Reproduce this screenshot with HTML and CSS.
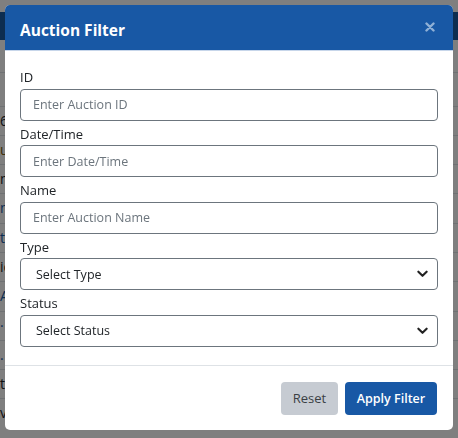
FILE: index.html
```html
<!DOCTYPE html>
<html lang="en">
<head>
<meta charset="utf-8">
<title>Auction Filter</title>
<link rel="stylesheet" href="styles.css">
</head>
<body>
<div class="page">
  <div class="topbar"></div>
  <div class="table">
    <div class="thead"></div>
    <div class="row"><span class="cell">6</span></div>
    <div class="row"><span class="cell gold">ul</span></div>
    <div class="row"><span class="cell">m</span></div>
    <div class="row"><span class="cell link">m</span></div>
    <div class="row"><span class="cell link">t</span></div>
    <div class="row"><span class="cell">ic</span></div>
    <div class="row"><span class="cell link">A</span></div>
    <div class="row"><span class="cell link">·</span></div>
    <div class="row"><span class="cell link">.</span></div>
    <div class="row"><span class="cell">t</span></div>
    <div class="row"><span class="cell">v</span></div>
  </div>
</div>
<div class="backdrop"></div>
<div class="modal">
  <div class="modal-header">
    <h5 class="modal-title">Auction Filter</h5>
    <button class="close" type="button" aria-label="Close">
      <svg viewBox="0 0 10 10" width="10" height="10"><path d="M1.5 1.5 L8.5 8.5 M8.5 1.5 L1.5 8.5" stroke="currentColor" stroke-width="2.4" stroke-linecap="round"/></svg>
    </button>
  </div>
  <div class="modal-body">
    <div class="group">
      <label class="label">ID</label>
      <input class="control" type="text" placeholder="Enter Auction ID">
    </div>
    <div class="group">
      <label class="label">Date/Time</label>
      <input class="control" type="text" placeholder="Enter Date/Time">
    </div>
    <div class="group">
      <label class="label">Name</label>
      <input class="control" type="text" placeholder="Enter Auction Name">
    </div>
    <div class="group">
      <label class="label">Type</label>
      <div class="select">
        <span class="select-text">Select Type</span>
        <svg class="chev" viewBox="0 0 12 8" width="11" height="8"><path d="M1.5 1.5 L6 6 L10.5 1.5" fill="none" stroke="#222" stroke-width="2.3" stroke-linecap="round" stroke-linejoin="round"/></svg>
      </div>
    </div>
    <div class="group">
      <label class="label">Status</label>
      <div class="select">
        <span class="select-text">Select Status</span>
        <svg class="chev" viewBox="0 0 12 8" width="11" height="8"><path d="M1.5 1.5 L6 6 L10.5 1.5" fill="none" stroke="#222" stroke-width="2.3" stroke-linecap="round" stroke-linejoin="round"/></svg>
      </div>
    </div>
  </div>
  <div class="modal-footer">
    <button class="btn btn-reset" type="button">Reset</button>
    <button class="btn btn-apply" type="button">Apply Filter</button>
  </div>
</div>
</body>
</html>
```
FILE: styles.css
```css
* { box-sizing: border-box; }
html, body { margin: 0; padding: 0; }
body {
  width: 458px;
  height: 438px;
  overflow: hidden;
  background: #fff;
  font-family: "Open Sans", "Noto Sans", sans-serif;
  color: #212529;
}
.page { padding-top: 12px; }
.topbar { height: 28px; background: #1b5aa0; }
.table { margin-top: 32px; }
.thead { height: 33.5px; border-top: 1px solid #dee2e6; }
.row {
  height: 29.3px;
  border-top: 1px solid #dee2e6;
  font-size: 14px;
  line-height: 28px;
  overflow: hidden;
  white-space: nowrap;
}
.cell { display: block; color: #212529; }
.cell.gold { color: #7a5a08; }
.cell.link { color: #1a5aa6; }
.backdrop {
  position: fixed;
  inset: 0;
  background: rgba(0, 0, 0, 0.5);
}
.modal {
  position: fixed;
  left: 5px;
  top: 5px;
  width: 448px;
  height: 425px;
  background: #fff;
  border-radius: 5px;
  overflow: hidden;
  display: flex;
  flex-direction: column;
}
.modal-header {
  height: 46px;
  background: #1858a5;
  border-bottom: 1px solid #c7d6ea;
  display: flex;
  align-items: center;
  justify-content: space-between;
  padding: 0 16px 0 15px;
}
.modal-title {
  margin: 0;
  padding-top: 4px;
  color: #fff;
  font-size: 15.5px;
  font-weight: 700;
}
.close {
  border: 0;
  background: transparent;
  padding: 0;
  margin-right: 1px;
  margin-top: -2px;
  color: #8fb0d6;
  display: flex;
  width: 12px;
  height: 12px;
  align-items: center;
  justify-content: center;
}
.modal-body {
  padding: 13px 15px 17px 15px;
  display: flex;
  flex-direction: column;
}
.group { display: flex; flex-direction: column; }
.label {
  font-size: 13px;
  line-height: 20px;
  padding-top: 3px;
  margin-bottom: 1.5px;
  color: #212529;
}
.control, .select {
  height: 32px;
  width: 418px;
  border: 1px solid #6c757d;
  border-radius: 4px;
  font-family: inherit;
  font-size: 12.5px;
  padding: 0 12px;
  color: #212529;
  background: #fff;
  outline: none;
}
.control::placeholder { color: #6c757d; }
.select {
  display: flex;
  align-items: center;
  justify-content: space-between;
  padding: 0 9px 0 15px;
}
.chev { display: block; }
.modal-footer {
  margin-top: auto;
  border-top: 1px solid #dee2e6;
  height: 65px;
  display: flex;
  justify-content: flex-end;
  align-items: center;
  gap: 7px;
  padding: 0 16px 0 0;
}
.btn {
  height: 33px;
  border: 0;
  border-radius: 4px;
  font-family: inherit;
  font-size: 13px;
  padding: 0;
  white-space: nowrap;
}
.btn-reset { background: #c6cbd2; color: #3a3f44; width: 57px; }
.btn-apply { background: #1858a5; color: #fff; font-weight: 600; font-size: 12.5px; width: 92px; }
```
